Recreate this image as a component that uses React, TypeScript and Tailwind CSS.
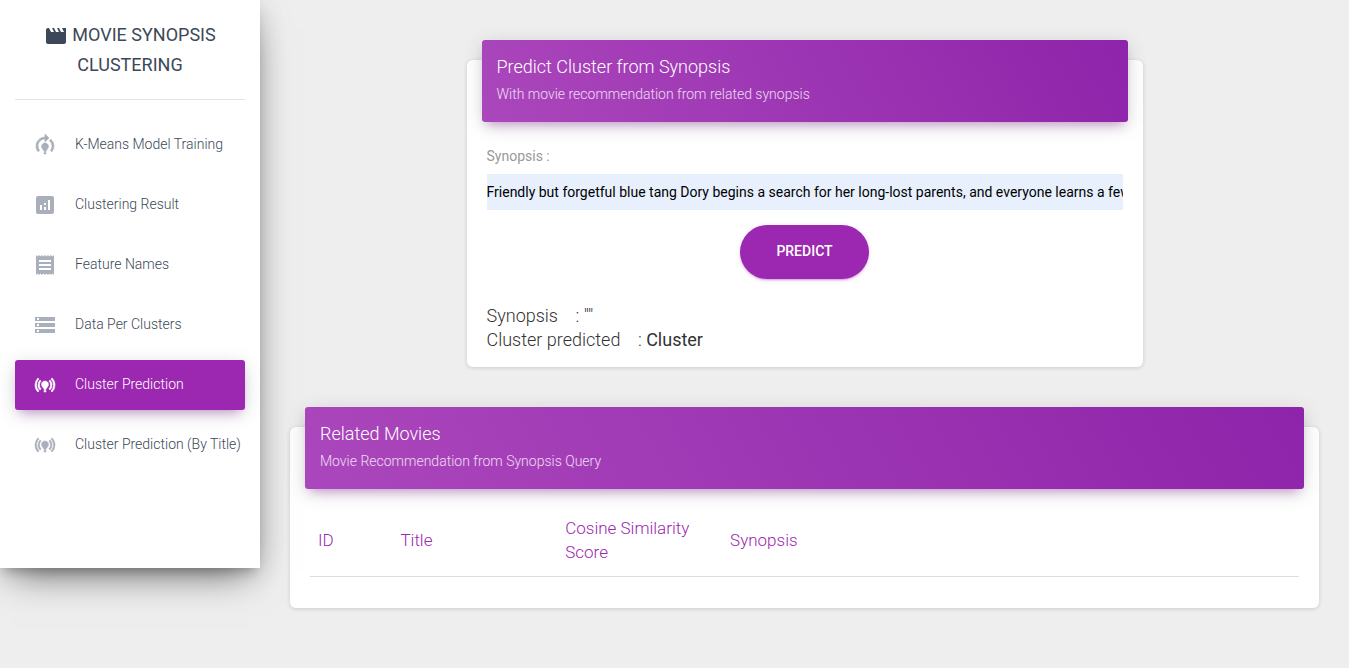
import { useState } from "react";
import type { ReactNode } from "react";
import type { IconType } from "react-icons";
import {
  MdAnalytics,
  MdModelTraining,
  MdMovieCreation,
  MdOnlinePrediction,
  MdReceipt,
  MdStorage,
} from "react-icons/md";

type NavItem = { label: string; icon: IconType; active?: boolean; stroke?: number };

const navItems: NavItem[] = [
  { label: "K-Means Model Training", icon: MdModelTraining, stroke: 0.6 },
  { label: "Clustering Result", icon: MdAnalytics },
  { label: "Feature Names", icon: MdReceipt },
  { label: "Data Per Clusters", icon: MdStorage },
  { label: "Cluster Prediction", icon: MdOnlinePrediction, active: true, stroke: 0.6 },
  { label: "Cluster Prediction (By Title)", icon: MdOnlinePrediction, stroke: 0.6 },
];

function Sidebar() {
  return (
    <aside className="relative z-10 h-[calc(100vh-100px)] w-[260px] shrink-0 bg-white px-[15px] shadow-[0_16px_38px_-12px_rgba(0,0,0,0.56),0_4px_25px_0_rgba(0,0,0,0.12),0_8px_10px_-5px_rgba(0,0,0,0.2)]">
      <div className="h-[100px] border-b border-[#e2e2e2] pt-5">
        <a
          href="#"
          className="block text-center text-lg leading-[30px] font-normal text-[#3c4858] uppercase"
        >
          <MdMovieCreation className="mr-1 inline size-6 align-middle" />
          Movie Synopsis Clustering
        </a>
      </div>
      <nav className="mt-5">
        <ul className="flex flex-col gap-2.5">
          {navItems.map(({ label, icon: Icon, active, stroke = 0 }) => (
            <li key={label}>
              <a
                href="#"
                aria-current={active ? "page" : undefined}
                className={
                  active
                    ? "flex h-[50px] items-center gap-[18px] rounded-[3px] bg-[#9c27b0] pl-[18px] text-white shadow-[0_4px_20px_0_rgba(0,0,0,0.14),0_7px_10px_-5px_rgba(156,39,176,0.4)]"
                    : "flex h-[50px] items-center gap-[18px] rounded-[3px] pl-[18px] text-[#3c4858]"
                }
              >
                <Icon
                  strokeWidth={stroke}
                  className={
                    active
                      ? "size-6 shrink-0 [&_[fill=none]]:stroke-none"
                      : "size-6 shrink-0 text-[#a9afbb] [&_[fill=none]]:stroke-none"
                  }
                />
                <span className="pb-0.5 text-sm whitespace-nowrap">{label}</span>
              </a>
            </li>
          ))}
        </ul>
      </nav>
    </aside>
  );
}

function Card({ title, subtitle, children }: { title: string; subtitle: string; children: ReactNode }) {
  return (
    <section className="rounded-md bg-white px-[15px] shadow-[0_1px_4px_0_rgba(0,0,0,0.14)]">
      <header className="relative -top-5 -mb-5 rounded-[3px] bg-[linear-gradient(60deg,#ab47bc,#8e24aa)] px-[15px] pt-3 pb-[17px] shadow-[0_4px_20px_0_rgba(0,0,0,0.14),0_7px_10px_-5px_rgba(156,39,176,0.4)]">
        <h4 className="text-lg leading-[30px] text-white">{title}</h4>
        <p className="mt-0.5 text-sm leading-[21px] text-white/80">{subtitle}</p>
      </header>
      {children}
    </section>
  );
}

export default function App() {
  const [synopsis, setSynopsis] = useState(
    "Friendly but forgetful blue tang Dory begins a search for her long-lost parents, and everyone learns a few things about the real meaning of family along the way.",
  );

  return (
    <div className="flex min-h-screen items-start bg-[#eeeeee] font-[Roboto,sans-serif] font-light">
      <Sidebar />
      <main className="flex min-w-0 flex-1 flex-col gap-[60px] px-[30px] py-[60px]">
        <div className="-mx-[15px] flex justify-center">
          <div className="w-2/3 px-[15px]">
            <Card title="Predict Cluster from Synopsis" subtitle="With movie recommendation from related synopsis">
              <form className="px-[5px] pt-6" onSubmit={(event) => event.preventDefault()}>
                <label htmlFor="synopsis" className="block text-sm font-normal text-[#999999]">
                  Synopsis :
                </label>
                <input
                  id="synopsis"
                  type="text"
                  value={synopsis}
                  onChange={(event) => setSynopsis(event.target.value)}
                  className="mt-2 block h-9 w-full bg-[#e8f0fe] text-sm font-normal text-black outline-none"
                />
                <button
                  type="submit"
                  className="mx-auto mt-[15px] block h-[54px] rounded-full bg-[#9c27b0] px-9 pb-0.5 text-sm font-medium text-white uppercase shadow-[0_2px_2px_0_rgba(156,39,176,0.14),0_3px_1px_-2px_rgba(156,39,176,0.2),0_1px_5px_0_rgba(156,39,176,0.12)]"
                >
                  Predict
                </button>
              </form>
              <div className="px-[5px] pt-[25px] pb-[15px] text-lg leading-6 text-[#333333]">
                <p>Synopsis &nbsp;&nbsp; : ""</p>
                <p>
                  Cluster predicted &nbsp;&nbsp; : <b className="font-normal">Cluster</b>
                </p>
              </div>
            </Card>
          </div>
        </div>
        <Card title="Related Movies" subtitle="Movie Recommendation from Synopsis Query">
          <div className="px-[5px] pt-[15px] pb-[31px]">
            <table className="w-full table-fixed text-left">
              <thead className="border-b border-[#dddddd] text-[17px] leading-6 text-[#9c27b0]">
                <tr>
                  <th className="w-1/12 px-2 py-3 font-light">ID</th>
                  <th className="w-1/6 px-2 py-3 font-light">Title</th>
                  <th className="w-1/6 px-2 py-3 font-light">Cosine Similarity Score</th>
                  <th className="px-2 py-3 font-light">Synopsis</th>
                </tr>
              </thead>
            </table>
          </div>
        </Card>
      </main>
    </div>
  );
}
